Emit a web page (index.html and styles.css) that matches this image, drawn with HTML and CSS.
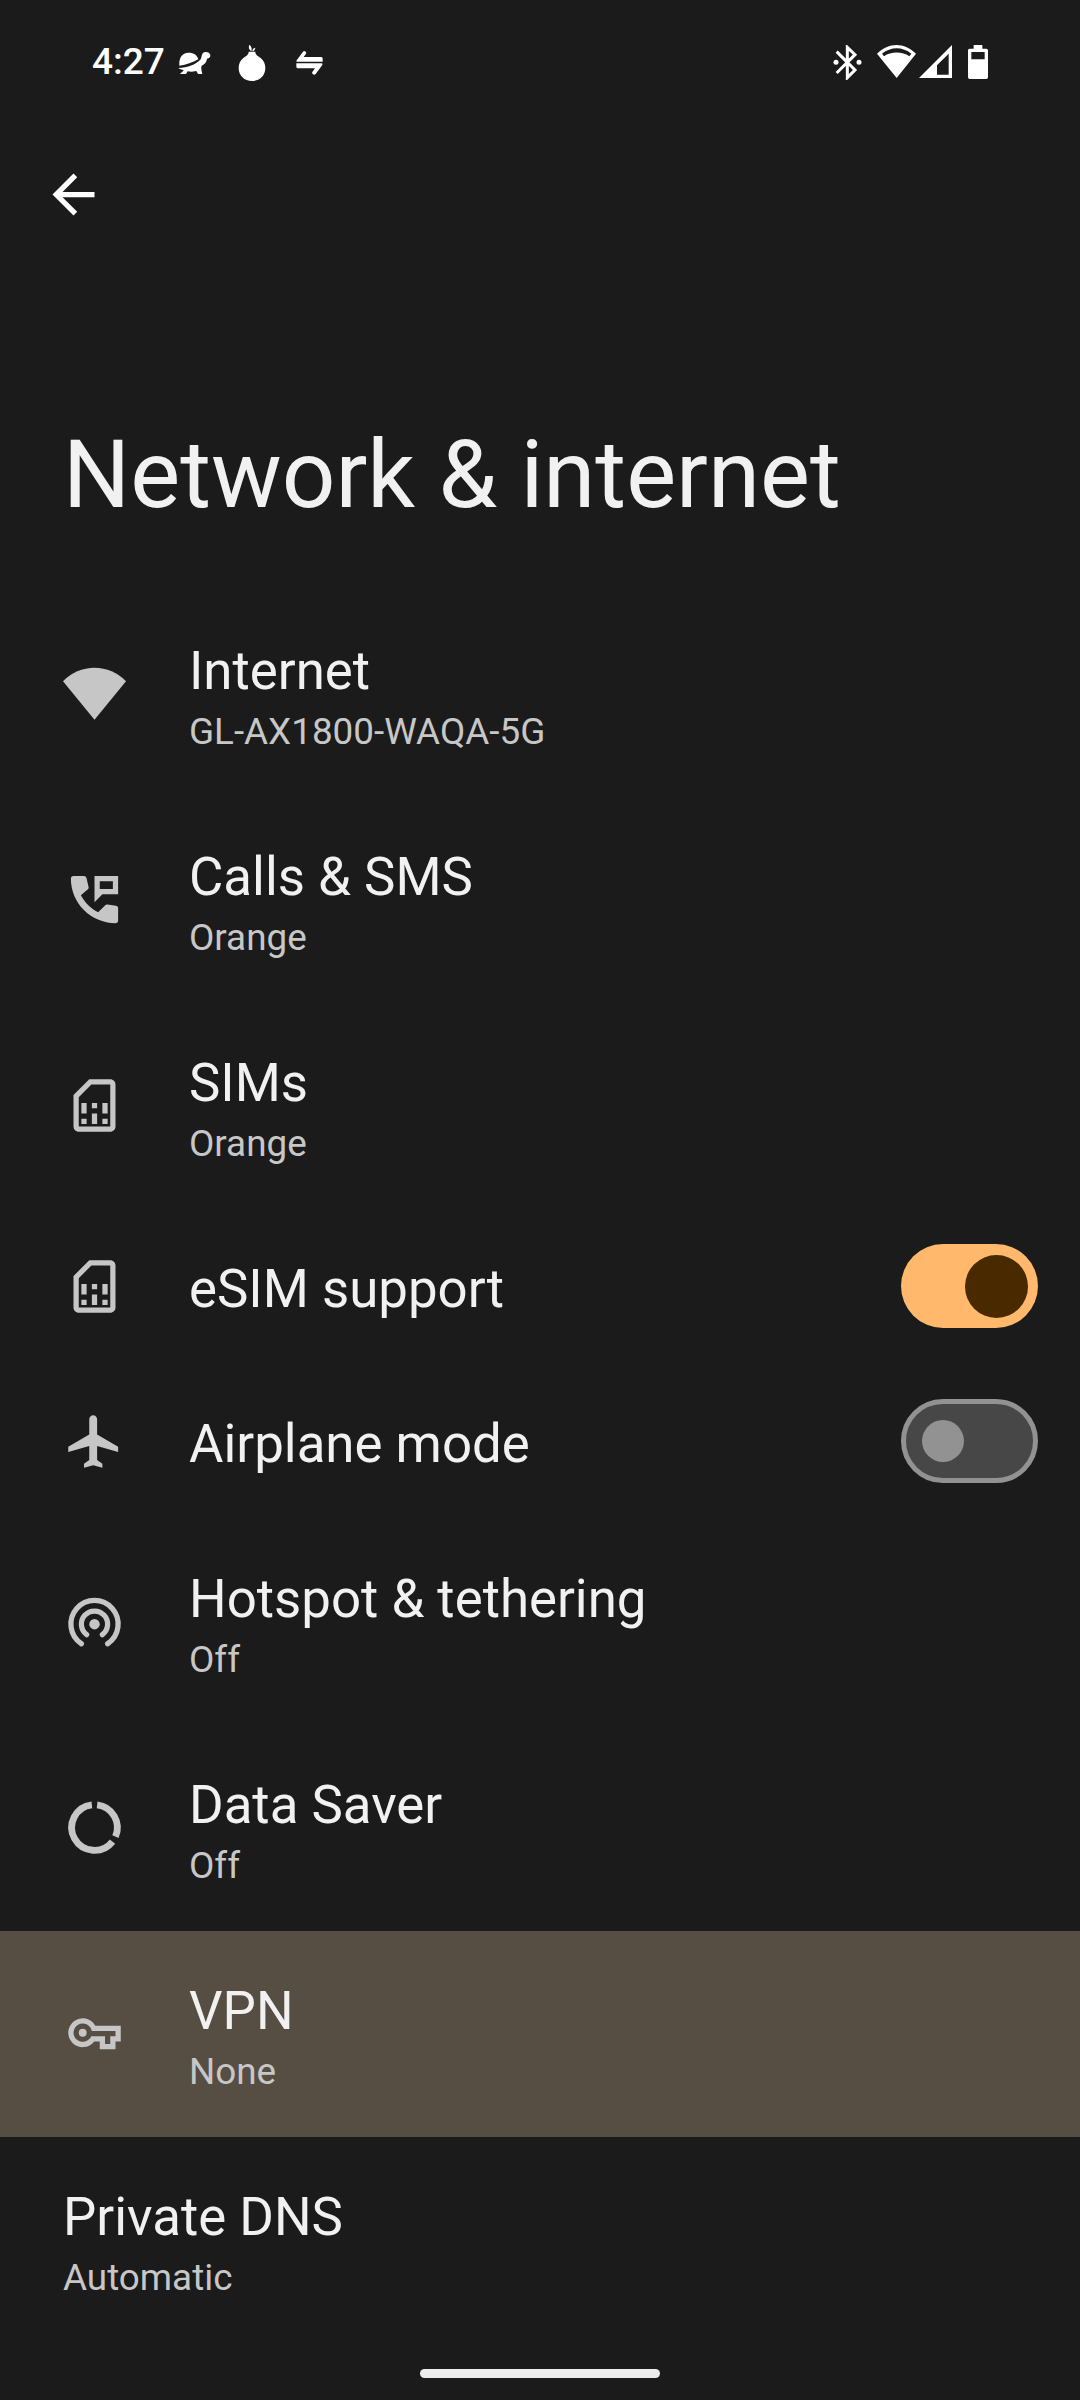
FILE: index.html
```html
<!DOCTYPE html>
<html lang="en">
<head>
<meta charset="utf-8">
<title>Network &amp; internet</title>
<link rel="stylesheet" href="styles.css">
</head>
<body>
<div class="screen">
  <header class="status">
    <div class="status-left">
      <span class="clock">4:27</span>
      <svg class="turtle" viewBox="354 90 102 75" width="34" height="25"><path d="M358 137C356 113 367 98 385 98C402 98 412 106 415 118C397 128 380 134 358 137Z"/><path d="M355 144C384 142 406 134 421 119C425 115 424 108 427 102C431 94 446 94 450 103C453 111 448 115 441 116C440 126 434 133 425 137C422 143 425 152 427 162H414C412 158 411 155 408 153C399 156 391 156 383 154L378 162H360C365 157 370 154 371 150C365 149 359 147 355 144Z"/></svg>
      <svg class="onion" viewBox="534 72 84 114" width="28" height="38"><path d="M566 95H586C586 105 593 107 602 114C611 121 616 132 616 144C616 167 599 183 576 183C553 183 536 167 536 144C536 132 541 121 550 114C559 107 566 105 566 95Z"/><path d="M574 94C566 88 565 81 568 74C574 79 577 86 574 94ZM577 94C577 87 580 84 586 83C585 90 582 93 577 94Z"/></svg>
      <svg class="swap" viewBox="705 90 87 78" width="29" height="26"><path d="M709 122L729 95Q733 91 737 95Q740 98 738 101L731 111H784Q788 112 788 116V125H712Q708 125 709 122Z"/><path d="M709 130H785Q789 131 787 135L767 162Q763 166 758 162Q755 159 757 156L765 145H713Q709 144 709 140Z"/></svg>
    </div>
    <div class="status-right">
      <svg class="bt" viewBox="99 75 87 105" width="29" height="35"><path class="line" d="M110 95L142 127L110 159M142 127L165 104L142 82V173L165 150Z"/><circle cx="108" cy="127" r="7.500"/><circle cx="177" cy="127" r="7.500"/></svg>
      <svg class="wifi" viewBox="231 72 120 105" width="40" height="35"><path fill-rule="evenodd" d="M231 101C265 66 314 66 348 101L290 174ZM246 101L252 109C273 94 307 94 328 109L334 101C308 79 272 79 246 101Z"/></svg>
      <svg class="cell" viewBox="357 72 102 105" width="34" height="35"><path fill-rule="evenodd" d="M357 174L456 75V174ZM411 164H446V101L411 136Z"/></svg>
      <svg class="battery" viewBox="504 72 60 108" width="20" height="36"><path fill-rule="evenodd" d="M521 75H547V86H559Q564 86 564 91V172Q564 177 559 177H509Q504 177 504 172V91Q504 86 509 86H521ZM514 96V118H554V96Z"/></svg>
    </div>
  </header>

  <nav class="toolbar">
    <svg class="icon back" viewBox="0 0 24 24"><path d="M20 11H7.830l5.590-5.590L12 4l-8 8 8 8 1.410-1.410L7.830 13H20z"/></svg>
  </nav>

  <h1 class="heading">Network &amp; internet</h1>

  <main class="list">
    <section class="row">
      <svg class="icon" viewBox="0 0 24 24"><path d="M0 7.350A16.600 16.600 0 0 1 24 7.350L12 22z"/></svg>
      <div class="text"><div class="title">Internet</div><div class="summary">GL-AX1800-WAQA-5G</div></div>
    </section>
    <section class="row">
      <svg class="icon" viewBox="0 0 24 24"><path d="M4 3H7.900c.55 0 .95.300 1.050.850L9.750 7.200c.050.350 0 .600-.250.850L6.800 10.400c1.450 2.700 3.700 4.950 6.600 6.500l2.700-2.750c.25-.250.5-.300.850-.250l3.200.500c.5.100.850.450.850.950V20c0 .600-.4 1-1 1C10.600 21 3 13.400 3 4c0-.600.4-1 1-1z"/><path fill-rule="evenodd" d="M12 3h9v7h-6l-3 3zM14 5v3h5V5z"/></svg>
      <div class="text"><div class="title">Calls &amp; SMS</div><div class="summary">Orange</div></div>
    </section>
    <section class="row">
      <svg class="icon" viewBox="0 0 24 24"><path fill-rule="evenodd" d="M18 2h-8L4 8v12c0 1.100.9 2 2 2h12c1.100 0 2-.9 2-2V4c0-1.100-.9-2-2-2zM18 20H6V8.830L10.830 4H18z"/><path d="M7 17h2v2H7zM15 17h2v2h-2zM7 11h2v4H7zM11 15h2v4h-2zM11 11h2v2h-2zM15 11h2v4h-2z"/></svg>
      <div class="text"><div class="title">SIMs</div><div class="summary">Orange</div></div>
    </section>
    <section class="row single">
      <svg class="icon" viewBox="0 0 24 24"><path fill-rule="evenodd" d="M18 2h-8L4 8v12c0 1.100.9 2 2 2h12c1.100 0 2-.9 2-2V4c0-1.100-.9-2-2-2zM18 20H6V8.830L10.830 4H18z"/><path d="M7 17h2v2H7zM15 17h2v2h-2zM7 11h2v4H7zM11 15h2v4h-2zM11 11h2v2h-2zM15 11h2v4h-2z"/></svg>
      <div class="text"><div class="title">eSIM support</div></div>
      <div class="switch on"><div class="thumb"></div></div>
    </section>
    <section class="row single">
      <svg class="icon" viewBox="0 0 24 24"><path d="M21 16v-2l-8-4.700V3.500c0-.83-.67-1.500-1.500-1.500S10 2.670 10 3.500v5.800L2 14v2l8-2.300V19l-2 1.500V22l3.500-1 3.500 1v-1.500L13 19v-5.300z"/></svg>
      <div class="text"><div class="title">Airplane mode</div></div>
      <div class="switch"><div class="thumb"></div></div>
    </section>
    <section class="row">
      <svg class="icon" viewBox="0 0 24 24"><path class="arc" d="M7 20.480A9 9 0 1 1 17 20.480M9 17A5 5 0 1 1 15 17"/><circle cx="12" cy="13" r="2"/></svg>
      <div class="text"><div class="title">Hotspot &amp; tethering</div><div class="summary">Off</div></div>
    </section>
    <section class="row">
      <svg class="icon" viewBox="0 0 24 24"><path class="ring" d="M13 3.360A8.700 8.700 0 0 1 19.980 15.460M18.860 17.360A8.700 8.700 0 1 1 11 3.360"/></svg>
      <div class="text"><div class="title">Data Saver</div><div class="summary">Off</div></div>
    </section>
    <section class="row pressed">
      <svg class="icon" viewBox="0 0 24 24"><path fill-rule="evenodd" d="M12.290 9H22v6h-2v3h-6v-3h-2.100A5.500 5.500 0 1 1 12.290 9zM10.950 11A3.500 3.500 0 1 0 10.750 13H16v3h2v-3h2v-2z"/><circle cx="7.500" cy="11.700" r="1.500"/></svg>
      <div class="text"><div class="title">VPN</div><div class="summary">None</div></div>
    </section>
    <section class="row">
      <div class="text"><div class="title">Private DNS</div><div class="summary">Automatic</div></div>
    </section>
  </main>

  <footer class="gesture"><div class="pill"></div></footer>
</div>
</body>
</html>
```
FILE: styles.css
```css
* { box-sizing: border-box; }

body {
  margin: 0;
  background: #1b1b1b;
  color: #f1f1f1;
  font-family: Roboto, sans-serif;
}

svg { display: block; flex: none; fill: currentColor; }

.screen {
  display: flex;
  flex-direction: column;
  width: 1080px;
  height: 2400px;
  overflow: hidden;
}

.status {
  display: flex;
  justify-content: space-between;
  height: 124px;
  padding: 44px 92px 0 92px;
  color: #fff;
}
.status-left, .status-right { display: flex; align-items: flex-start; }
.clock {
  width: 86px;
  font-size: 37px;
  font-weight: 500;
  line-height: 36px;
}
.turtle { margin-top: 6px; }
.onion { margin-left: 26px; }
.swap { margin: 6px 0 0 29px; }
.bt { margin-top: 1px; }
.bt .line { fill: none; stroke: currentColor; stroke-width: 9; }
.wifi { margin-left: 15px; }
.cell { margin-left: 2px; }
.battery { margin-left: 15px; }

.toolbar {
  display: flex;
  align-items: center;
  height: 141px;
  padding-left: 42px;
}

.icon { width: 63px; height: 63px; color: #c6c6c6; }
.row .icon { margin-bottom: 2px; }
.row.single .icon { margin-bottom: 0; }
.back { color: #fff; }
.arc { fill: none; stroke: currentColor; stroke-width: 2; stroke-linecap: round; }
.ring { fill: none; stroke: currentColor; stroke-width: 2.6; }

.heading {
  height: 326px;
  margin: 0;
  padding: 155px 63px 0;
  font-size: 94.2px;
  font-weight: 400;
  line-height: 111px;
  white-space: nowrap;
}

.list { flex: 1; }
.row {
  display: flex;
  align-items: center;
  gap: 63px;
  height: 206px;
  padding: 0 42px 0 63px;
}
.row.single { height: 155px; }
.row.pressed { background: #564d43; }
.text { flex: 1; align-self: stretch; padding-top: 45px; }
.title { font-size: 52.8px; line-height: 70px; }
.summary {
  margin-top: 4px;
  color: #c7c7c7;
  font-size: 36.85px;
  line-height: 43px;
}

.switch {
  display: flex;
  align-items: center;
  width: 137px;
  height: 84px;
  margin-bottom: 1px;
  padding: 0 16px;
  border: 5px solid #929292;
  border-radius: 42px;
  background: #474747;
}
.thumb { width: 42px; height: 42px; border-radius: 50%; background: #929292; }
.switch.on {
  justify-content: flex-end;
  padding: 0 10px;
  border: 0;
  background: #ffb86c;
}
.switch.on .thumb { width: 63px; height: 63px; background: #482900; }

.gesture { display: flex; justify-content: center; height: 31px; }
.pill { width: 240px; height: 9px; border-radius: 5px; background: #ececec; }
```
